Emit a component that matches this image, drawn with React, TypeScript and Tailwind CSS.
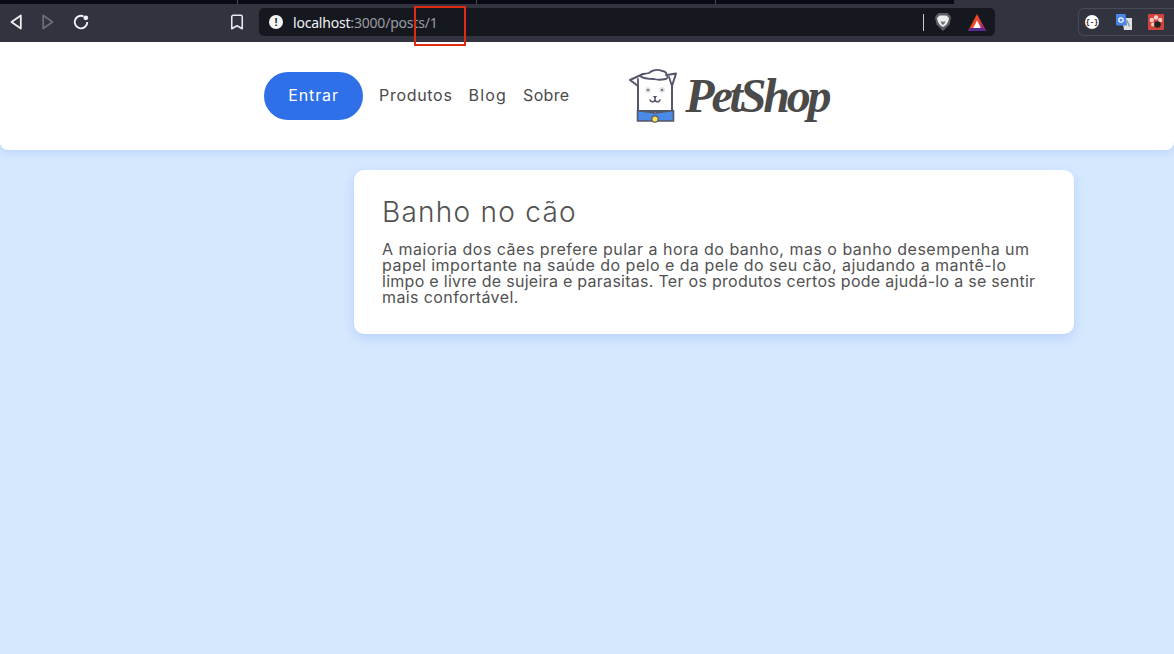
import { Bookmark } from 'lucide-react';

const montserrat = "font-['Inter','Liberation_Sans',sans-serif]";

function BrowserBar() {
  return (
    <div className="relative shrink-0">
      {/* Tab strip */}
      <div className="flex h-[4px] bg-[#31333f]">
        <div className="flex w-[954px] bg-[#090a14]">
          <div className="w-[238px] border-r border-[#4a4c58]" />
          <div className="w-[239px] border-r border-[#4a4c58]" />
          <div className="w-[239px] border-r border-[#4a4c58]" />
        </div>
      </div>

      <div className="flex h-[38px] items-center bg-[#31333f] pb-[2px]">
        <div className="flex w-[259px] items-center">
          <svg className="ml-[10px] h-[16px] w-[12px]" viewBox="0 0 12 16" fill="none" stroke="#f1f2f4" strokeWidth="1.8" strokeLinejoin="round">
            <path d="M10.8 1.500 1.500 8l9.300 6.500z" />
          </svg>
          <svg className="ml-[20px] h-[16px] w-[12px]" viewBox="0 0 12 16" fill="none" stroke="#6b6d78" strokeWidth="1.8" strokeLinejoin="round">
            <path d="M1.200 1.500 10.500 8l-9.300 6.500z" />
          </svg>
          <svg className="ml-[19px] h-[16px] w-[16px]" viewBox="0 0 16 16" fill="none">
            <path d="M10.500 2.300A6.300 6.300 0 1 0 14.300 8" stroke="#f1f2f4" strokeWidth="1.900" />
            <circle cx="12.800" cy="3.800" r="2.400" fill="#f1f2f4" />
          </svg>
          <Bookmark className="ml-[139px] h-[18px] w-[18px] text-[#e8e9ec]" strokeWidth={2.1} />
        </div>

        <div className="flex h-[28px] w-[736px] items-center rounded-[5px] bg-[#16181f] pl-[10px]">
          <span className="flex h-[14px] w-[14px] items-center justify-center rounded-full bg-[#f4f4f5] text-[11px] font-bold leading-none text-[#16181f] font-['Liberation_Sans',sans-serif]">!</span>
          <span className="ml-[10px] text-[14px] tracking-[-0.2px] text-[#f1f2f4] font-['Noto_Sans',sans-serif]">
            localhost<span className="text-[#9a9ba3]">:3000/posts/1</span>
          </span>
          <div className="ml-auto h-[17px] w-px bg-[#c9cacd]" />
          {/* Brave lion */}
          <svg className="ml-[11px] h-[18px] w-[16px]" viewBox="0 0 16 18">
            <path d="M3.500 0h9L15 2.500l1 2-1.500 7L8 18l-6.500-6.500L0 4.500l1-2z" fill="#5c5e68" />
            <path d="M4.500 2.500h7L14 5l-1 4-2 3-3 2-3-2-2-3-1-4z" fill="#eceded" />
            <path d="M5.500 8.500h2l.5 1 .5-1h2L9 11.500H7z" fill="#6d6f78" />
          </svg>
          {/* BAT triangle */}
          <svg className="ml-[17px] mr-[9px] h-[17px] w-[18px]" viewBox="0 0 18 17">
            <path d="M9 0 18 17H0z" fill="#ef4a22" />
            <path d="M9 0l9 17H9.500l3.500-7z" fill="#a8258f" opacity="0.85" />
            <path d="M0 17h18l-2-3H2z" fill="#5b2a90" />
            <path d="M9 6.500l3.800 7.500H5.200z" fill="#ffffff" />
          </svg>
        </div>

        <div className="ml-auto flex h-[28px] w-[96px] items-center rounded-l-[6px] border border-r-0 border-[#484a56] pl-[6px]">
          <span className="flex h-[14px] w-[14px] items-center justify-center rounded-full bg-white text-[7px] font-bold leading-none text-[#222] font-['Liberation_Mono',monospace]">{'{-}'}</span>
          <svg className="ml-[17px] h-[16px] w-[16px]" viewBox="0 0 16 16">
            <path d="M6 4h10v12H8z" fill="#dfe1e4" />
            <path d="M11 6.500l2.500 6" stroke="#8e9196" strokeWidth="1.200" />
            <path d="M0 0h9.500L11 11.500H1.500A1.500 1.500 0 0 1 0 10z" fill="#4a86e8" />
            <circle cx="5" cy="6" r="2.200" fill="none" stroke="#ffffff" strokeWidth="1.200" />
          </svg>
          <svg className="ml-[16px] h-[16px] w-[16px]" viewBox="0 0 16 16">
            <rect width="16" height="16" rx="1" fill="#d2453c" />
            <circle cx="3.800" cy="6" r="2.200" fill="#f2c9c5" />
            <circle cx="8" cy="3.500" r="2.200" fill="#f2c9c5" />
            <circle cx="12.200" cy="6" r="2.200" fill="#f2c9c5" />
            <circle cx="5" cy="10.500" r="2" fill="#f2c9c5" />
            <circle cx="9.500" cy="10.500" r="3.300" fill="#222222" />
          </svg>
        </div>
      </div>
    </div>
  );
}

function Logo() {
  return (
    <div className="ml-[60px] flex items-center">
      <svg className="h-[54px] w-[48px]" viewBox="0 0 48 54" fill="none">
        {/* Head and ears */}
        <path d="M1 11 14 5 38 6 47 4.500 43 17V42H9V17z" fill="#ffffff" stroke="#54566a" strokeWidth="2" strokeLinejoin="round" />
        <path d="M9 17V10M43 17 40 8" stroke="#54566a" strokeWidth="1.800" strokeLinecap="round" />
        {/* Hat of fur */}
        <path d="M11 7c2-3 6-2 9-3 3-3 9-4 13-2 3 0 5 2 4 4 2 1 2 3 0 4-5 1-9 1-12 0-5 0-10 0-14-3z" fill="#ffffff" stroke="#54566a" strokeWidth="1.800" strokeLinejoin="round" />
        {/* Face */}
        <circle cx="19" cy="21" r="2.800" fill="#dcdde2" />
        <circle cx="19" cy="21" r="1" fill="#54566a" />
        <circle cx="33" cy="21" r="2.800" fill="#dcdde2" />
        <circle cx="33" cy="21" r="1" fill="#54566a" />
        <path d="M24.500 27.500h3l-1.500 1.500z" fill="#54566a" stroke="#54566a" strokeWidth="1" strokeLinejoin="round" />
        <path d="M21 31c1 2.500 4 2.500 5 0 1 2.500 4 2.500 5 0M26 29v2" stroke="#54566a" strokeWidth="1.600" strokeLinecap="round" />
        {/* Collar */}
        <path d="M8.500 41.500 26 44 44.500 41.500V52H8.500z" fill="#4a8be8" stroke="#54566a" strokeWidth="1.600" strokeLinejoin="round" />
        <circle cx="26" cy="50" r="3.200" fill="#ffe14d" stroke="#54566a" strokeWidth="1.200" />
      </svg>
      <span className="ml-[8px] text-[48px] font-bold italic leading-none tracking-[-3.2px] text-[#4a4a4a] font-['Liberation_Serif',serif]">PetShop</span>
    </div>
  );
}

function Header() {
  return (
    <header className={`flex h-[108px] shrink-0 items-center rounded-b-[8px] bg-white pl-[264px] shadow-[0_2px_10px_rgba(47,111,232,0.18)] ${montserrat}`}>
      <button className="h-[48px] w-[99px] rounded-full bg-[#2f6fe8] pb-[2px] text-[16px] tracking-[0.9px] text-white">Entrar</button>
      <nav className="mb-[2px] ml-[16px] flex items-center gap-[16px] text-[16px] text-[#4a4a4a]">
        <a className="tracking-[0.7px]">Produtos</a>
        <a className="tracking-[1.2px]">Blog</a>
        <a className="tracking-[0.3px]">Sobre</a>
      </nav>
      <Logo />
    </header>
  );
}

function PostCard() {
  return (
    <article className={`ml-auto mr-[100px] mt-[20px] h-[164px] w-[720px] rounded-[10px] bg-white px-[28px] pt-[24px] text-[#525252] shadow-[0_4px_12px_rgba(47,111,232,0.18)] ${montserrat}`}>
      <h1 className="text-[28px] font-light leading-[36px] tracking-[1.25px]">Banho no cão</h1>
      <p className="mt-[11px] text-[16px] leading-[16px]">
        <span className="block tracking-[0.49px]">A maioria dos cães prefere pular a hora do banho, mas o banho desempenha um</span>
        <span className="block tracking-[0.47px]">papel importante na saúde do pelo e da pele do seu cão, ajudando a mantê-lo</span>
        <span className="block tracking-[0.28px]">limpo e livre de sujeira e parasitas. Ter os produtos certos pode ajudá-lo a se sentir</span>
        <span className="block tracking-[0.4px]">mais confortável.</span>
      </p>
    </article>
  );
}

export default function App() {
  return (
    <div className="relative flex h-[654px] flex-col overflow-hidden bg-[#d6e8fe]">
      <BrowserBar />
      <Header />
      <PostCard />
      {/* Red annotation box over the address bar */}
      <div className="absolute left-[414px] top-[6px] h-[40px] w-[52px] border-2 border-[#dd2c12]" />
    </div>
  );
}
